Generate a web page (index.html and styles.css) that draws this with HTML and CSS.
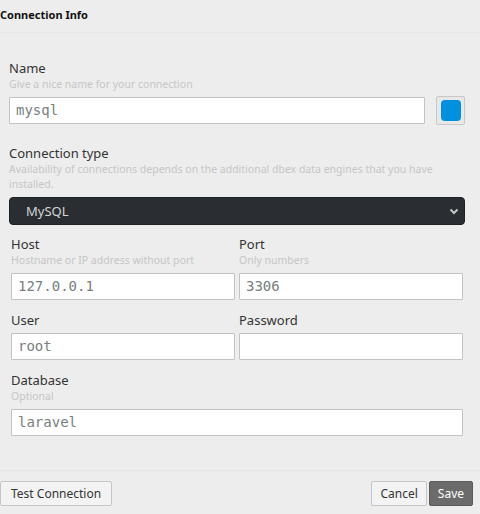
FILE: index.html
```html
<!DOCTYPE html>
<html>
<head>
<meta charset="utf-8">
<link rel="stylesheet" href="styles.css">
</head>
<body>
<div class="dialog">
  <div class="header">Connection Info</div>
  <div class="content">
    <div class="field">
      <div class="label">Name</div>
      <div class="hint">Give a nice name for your connection</div>
      <div class="name-row">
        <div class="input name-input">mysql</div>
        <div class="color-btn"><span class="swatch"></span></div>
      </div>
    </div>
    <div class="field">
      <div class="label">Connection type</div>
      <div class="hint">Availability of connections depends on the additional dbex data engines that you have installed.</div>
      <div class="select">
        <span>MySQL</span>
        <svg class="chev" width="10" height="7" viewBox="0 0 10 7"><path d="M1.5 1.5 L5 5 L8.5 1.5" fill="none" stroke="#c4c6c8" stroke-width="2"/></svg>
      </div>
    </div>
    <div class="grid">
      <div class="cell">
        <div class="label">Host</div>
        <div class="hint">Hostname or IP address without port</div>
        <div class="input">127.0.0.1</div>
      </div>
      <div class="cell">
        <div class="label">Port</div>
        <div class="hint">Only numbers</div>
        <div class="input">3306</div>
      </div>
      <div class="cell">
        <div class="label">User</div>
        <div class="input">root</div>
      </div>
      <div class="cell">
        <div class="label">Password</div>
        <div class="input"></div>
      </div>
      <div class="cell wide">
        <div class="label">Database</div>
        <div class="hint">Optional</div>
        <div class="input">laravel</div>
      </div>
    </div>
  </div>
  <div class="footer">
    <button class="btn">Test Connection</button>
    <div class="actions">
      <button class="btn">Cancel</button>
      <button class="btn primary">Save</button>
    </div>
  </div>
</div>
</body>
</html>
```

FILE: styles.css
```css
html, body {
  margin: 0;
  padding: 0;
  background: #ededed;
}
body {
  font-family: "Noto Sans", "Open Sans", sans-serif;
  color: #333;
  width: 480px;
  height: 514px;
  overflow: hidden;
}
.dialog {
  display: flex;
  flex-direction: column;
  height: 514px;
}
.header {
  box-sizing: border-box;
  height: 33px;
  border-bottom: 1px solid #e6e6e6;
  font-size: 11px;
  font-weight: bold;
  color: #111;
  line-height: 30px;
}
.content {
  padding: 26px 15px 0 9px;
  flex: 1;
}
.field {
  margin-bottom: 19px;
}
.label {
  font-size: 13px;
  line-height: 18px;
  color: #333;
}
.hint {
  font-size: 10.5px;
  line-height: 15px;
  color: #c6c6c6;
}
.name-row {
  display: flex;
  align-items: flex-start;
  gap: 11px;
  margin-top: 5px;
}
.input {
  box-sizing: border-box;
  height: 27px;
  background: #fff;
  border: 1px solid #c2c2c2;
  border-radius: 1px;
  font-family: "DejaVu Sans Mono", monospace;
  font-size: 14px;
  color: #76807f;
  line-height: 25px;
  padding-left: 6px;
}
.name-input {
  flex: 1;
}
.color-btn {
  box-sizing: border-box;
  width: 29px;
  height: 29px;
  border: 1px solid #c8c8c8;
  border-radius: 2px;
  background: #e8e8e8;
  display: flex;
  align-items: center;
  justify-content: center;
  margin-top: -1px;
}
.swatch {
  width: 20px;
  height: 21px;
  background: #0090e0;
  border-radius: 4px;
}
.select {
  box-sizing: border-box;
  margin-top: 5px;
  height: 28px;
  background: #2a2d32;
  border: 1px solid #1e2024;
  border-radius: 4px;
  display: flex;
  align-items: center;
  justify-content: space-between;
  padding: 0 5px 0 16px;
  color: #d4d6d8;
  font-size: 13px;
}
.chev {
  display: block;
}
.grid {
  display: grid;
  grid-template-columns: 224px 224px;
  column-gap: 4px;
  row-gap: 11px;
  padding-left: 2px;
  margin-top: -9px;
}
.cell .input {
  margin-top: 5px;
}
.cell .label + .input {
  margin-top: 4px;
}
.wide {
  grid-column: 1 / 3;
}
.footer {
  border-top: 1px solid #e4e4e4;
  height: 44px;
  box-sizing: border-box;
  display: flex;
  justify-content: space-between;
  align-items: flex-start;
  padding: 10px 7px 0 0;
}
.actions {
  display: flex;
  gap: 2px;
}
.btn {
  font-family: "Noto Sans", "Open Sans", sans-serif;
  font-size: 12px;
  color: #333;
  height: 25px;
  padding: 0 10px;
  background: #f3f3f3;
  border: 1px solid #c6c6c6;
  border-radius: 2px;
  margin: 0;
}
.actions .btn {
  padding: 0 8px;
}
.btn.primary {
  background: #6b6b6b;
  border-color: #5a5a5a;
  color: #fff;
}
```
